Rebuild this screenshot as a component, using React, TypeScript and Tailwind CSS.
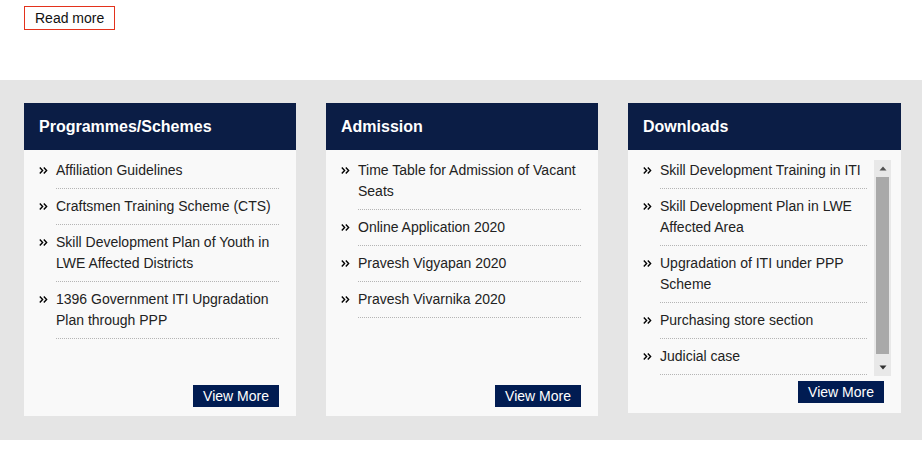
import React from "react";

const font = { fontFamily: '"Liberation Sans", Arial, sans-serif' };

type CardProps = {
  title: string;
  items: string[];
  scroll?: boolean;
};

function Chevrons() {
  return (
    <svg width="9" height="7" viewBox="0 0 9 7" className="block">
      <path d="M0.8 0.6 L3.6 3.5 L0.8 6.4 M4.8 0.6 L7.6 3.5 L4.8 6.4" fill="none" stroke="#000" strokeWidth="1.4" />
    </svg>
  );
}

function Item({ text, first }: { text: string; first: boolean }) {
  return (
    <li className={`flex ${first ? "" : "pt-[7px]"}`}>
      <span className="w-[18px] shrink-0 pt-[7px] pl-[1px]">
        <Chevrons />
      </span>
      <div className="flex-1 pb-[7px] border-b border-dotted border-[#b5b5b5] text-[14px] leading-[21px] text-[#222]">
        {text}
      </div>
    </li>
  );
}

function ViewMore() {
  return (
    <button className="h-[22px] px-[10px] bg-[#011c52] text-white text-[14px] leading-[22px]">
      View More
    </button>
  );
}

function ScrollBar() {
  return (
    <div className="w-[17px] h-[216px] shrink-0 bg-[#e8e8e8] flex flex-col">
      <div className="h-[17px] flex items-center justify-center">
        <svg width="8" height="5" viewBox="0 0 8 5">
          <path d="M4 0.5 L7.5 4.5 L0.5 4.5 Z" fill="#505050" />
        </svg>
      </div>
      <div className="flex-1">
        <div className="h-[177px] mx-[2px] bg-[#a9a9a9]" />
      </div>
      <div className="h-[17px] flex items-center justify-center">
        <svg width="8" height="5" viewBox="0 0 8 5">
          <path d="M0.5 0.5 L7.5 0.5 L4 4.5 Z" fill="#303030" />
        </svg>
      </div>
    </div>
  );
}

function Card({ title, items, scroll }: CardProps) {
  return (
    <div className={`${scroll ? "w-[273px]" : "w-[272px]"} bg-[#f9f9f9] flex flex-col`}>
      <div className="h-[47px] bg-[#0b1d45] flex items-center px-[15px]">
        <h2 className="text-white font-bold text-[16px] leading-[20px]">{title}</h2>
      </div>
      {scroll ? (
        <div className="pt-[10px] pl-[14px] pr-[10px] pb-[10px] flex flex-col">
          <div className="flex">
            <div className="flex-1 h-[216px] overflow-hidden">
              <ul className="pr-[7px] pb-[6px]">
                {items.map((t, i) => (
                  <Item key={t} text={t} first={i === 0} />
                ))}
              </ul>
            </div>
            <ScrollBar />
          </div>
          <div className="flex justify-end mt-[5px] pr-[7px]">
            <ViewMore />
          </div>
        </div>
      ) : (
        <div className="h-[266px] pt-[10px] pl-[14px] pr-[10px] pb-[9px] flex flex-col">
          <ul className="pr-[7px]">
            {items.map((t, i) => (
              <Item key={t} text={t} first={i === 0} />
            ))}
          </ul>
          <div className="flex justify-end mt-auto pr-[7px]">
            <ViewMore />
          </div>
        </div>
      )}
    </div>
  );
}

export default function App() {
  return (
    <div style={font} className="w-[922px] h-[462px] bg-white">
      <div className="h-[80px] pt-[6px] pl-[24px]">
        <button className="h-[24px] px-[10px] border border-[#e3321c] text-[14px] leading-[22px] text-[#111] bg-white">
          Read more
        </button>
      </div>
      <div className="h-[360px] bg-[#e5e5e5] pt-[23px] pl-[24px] flex items-start gap-[30px]">
        <Card
          title="Programmes/Schemes"
          items={[
            "Affiliation Guidelines",
            "Craftsmen Training Scheme (CTS)",
            "Skill Development Plan of Youth in LWE Affected Districts",
            "1396 Government ITI Upgradation Plan through PPP",
          ]}
        />
        <Card
          title="Admission"
          items={[
            "Time Table for Admission of Vacant Seats",
            "Online Application 2020",
            "Pravesh Vigyapan 2020",
            "Pravesh Vivarnika 2020",
          ]}
        />
        <Card
          title="Downloads"
          scroll
          items={[
            "Skill Development Training in ITI",
            "Skill Development Plan in LWE Affected Area",
            "Upgradation of ITI under PPP Scheme",
            "Purchasing store section",
            "Judicial case",
          ]}
        />
      </div>
    </div>
  );
}
